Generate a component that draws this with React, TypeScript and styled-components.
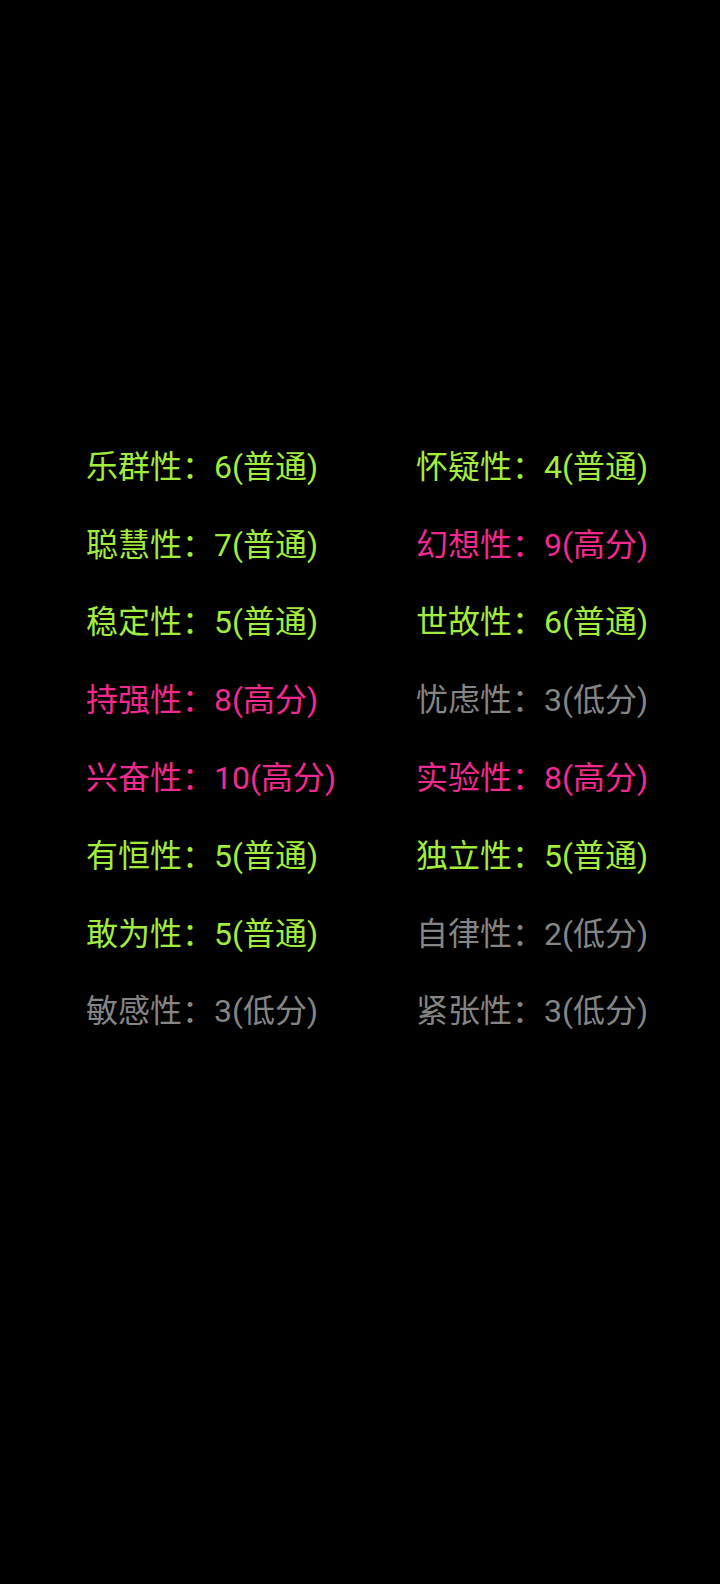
import React from "react";
import styled, { createGlobalStyle } from "styled-components";

const Global = createGlobalStyle`
  html, body { margin: 0; padding: 0; background: #000; }
  body { font-family: Roboto, "Noto Sans CJK SC", sans-serif; }
`;

const Page = styled.div`
  width: 720px;
  height: 1584px;
  background: #000;
  padding: 425px 0 0 86px;
  box-sizing: border-box;
`;

const Grid = styled.div`
  display: grid;
  grid-template-columns: 330px 280px;
  grid-auto-rows: 77.8px;
`;

type Level = "normal" | "high" | "low";

const colors: Record<Level, string> = {
  normal: "#a2ec3e",
  high: "#f02a8e",
  low: "#858585",
};

const Item = styled.div<{ $level: Level }>`
  display: flex;
  align-items: center;
  font-family: Roboto, "Noto Sans CJK SC", sans-serif;
  font-size: 32px;
  color: ${(p) => colors[p.$level]};
  white-space: nowrap;
`;

const data: [string, number, Level][] = [
  ["乐群性", 6, "normal"],
  ["怀疑性", 4, "normal"],
  ["聪慧性", 7, "normal"],
  ["幻想性", 9, "high"],
  ["稳定性", 5, "normal"],
  ["世故性", 6, "normal"],
  ["持强性", 8, "high"],
  ["忧虑性", 3, "low"],
  ["兴奋性", 10, "high"],
  ["实验性", 8, "high"],
  ["有恒性", 5, "normal"],
  ["独立性", 5, "normal"],
  ["敢为性", 5, "normal"],
  ["自律性", 2, "low"],
  ["敏感性", 3, "low"],
  ["紧张性", 3, "low"],
];

const label: Record<Level, string> = { normal: "普通", high: "高分", low: "低分" };

export default function App() {
  return (
    <>
      <Global />
      <Page>
        <Grid>
          {data.map(([name, score, level]) => (
            <Item key={name} $level={level}>
              {name}：{score}({label[level]})
            </Item>
          ))}
        </Grid>
      </Page>
    </>
  );
}
